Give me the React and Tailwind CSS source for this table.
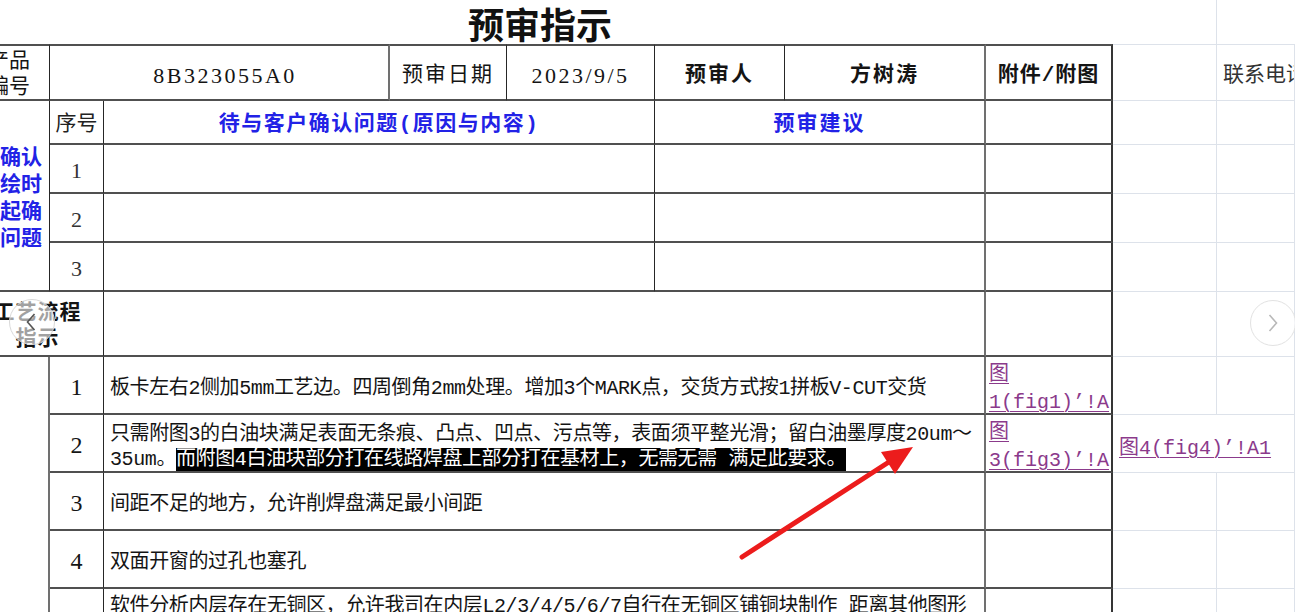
import React from 'react';

// cell borders
const T = 'border-t-2 border-t-[#505050]';
const H = 'border-b-2 border-b-[#505050]';
const V1 = 'border-r border-r-[#262626]';
const V2 = 'border-r-2 border-r-[#707070]';
const VE = 'border-r-2 border-r-[#353535]';
const LIGHT = 'border-r border-b border-[#dde2ea]';

const Light = ({ top, children, className = '' }) => (
  <div className={`${LIGHT} ${top ? 'border-t' : ''} ${className}`}>{children}</div>
);

const Num = ({ children, big }) => (
  <div
    className={`${V1} ${H} flex items-center justify-center pt-[4px] font-['Liberation_Serif',serif] ${
      big ? 'text-[24px] text-[#151515]' : 'text-[22px] text-[#333]'
    }`}
  >
    {children}
  </div>
);

const Link = ({ children }) => (
  <span className="text-[#8b3a8b] underline decoration-1 underline-offset-[3px]">{children}</span>
);

const rows = [
  { n: '1', text: ['板卡左右2侧加5mm工艺边。四周倒角2mm处理。增加3个MARK点，交货方式按1拼板V-CUT交货'], link: ['图', "1(fig1)’!A"] },
  { n: '2', text: null, link: ['图', "3(fig3)’!A"], side: "图4(fig4)’!A1" },
  { n: '3', text: ['间距不足的地方，允许削焊盘满足最小间距'] },
  { n: '4', text: ['双面开窗的过孔也塞孔'] },
];

export default function App() {
  return (
    <div className="relative w-[1295px] h-[612px] overflow-hidden bg-white text-[#141414] font-['Liberation_Mono','Noto_Sans_CJK_SC',monospace]">
      {/* title row */}
      <div className="flex h-[44px]">
        <div className="w-[1113px]">
          <div className="w-[1080px] text-center font-['Noto_Sans_CJK_SC',sans-serif] font-bold text-[36px] leading-[46px] text-[#111]">
            预审指示
          </div>
        </div>
        <div className="w-[104px] border-r border-[#dde2ea]" />
        <div className="flex-1" />
      </div>

      <div className="grid grid-cols-[50px_54px_286px_117px_148px_130px_201px_127px_104px_78px] grid-rows-[57px_44px_49px_49px_49px_65px_58px_58px_58px_58px_90px]">
        {/* row 1 */}
        <div className={`${T} ${H} ${V1} flex flex-col items-end justify-center overflow-hidden whitespace-nowrap pr-[19px] pt-[4px] text-[21px] leading-[26px]`}>
          <span>产品</span>
          <span>编号</span>
        </div>
        <div className={`${T} ${H} ${V2} col-span-2 flex items-center justify-center pl-[12px] pt-[6px] font-['Liberation_Serif',serif] text-[22px] tracking-[2.5px]`}>
          8B323055A0
        </div>
        <div className={`${T} ${H} ${V1} flex items-center justify-center pt-[6px] text-[21px] tracking-[2px]`}>预审日期</div>
        <div className={`${T} ${H} ${V1} flex items-center justify-center pt-[6px] font-['Liberation_Serif',serif] text-[22px] tracking-[2.5px]`}>
          2023/9/5
        </div>
        <div className={`${T} ${H} ${V1} flex items-center justify-center pt-[6px] font-bold text-[21px] tracking-[2px]`}>预审人</div>
        <div className={`${T} ${H} ${V2} flex items-center justify-center pt-[6px] font-bold text-[21px] tracking-[2px]`}>方树涛</div>
        <div className={`${T} ${H} ${VE} flex items-center justify-center pt-[6px] font-bold text-[21px] tracking-[1px]`}>附件/附图</div>
        <Light top />
        <Light top className="flex items-center overflow-hidden whitespace-nowrap pl-[6px] pt-[6px] text-[21px] text-[#333]">
          联系电话
        </Light>

        {/* row 2 */}
        <div className={`${H} ${V1} row-span-4 flex flex-col justify-center overflow-hidden whitespace-nowrap pt-[6px] text-[21px] leading-[27px] font-bold text-[#2222e6]`}>
          <span>确认</span>
          <span>绘时</span>
          <span>起确</span>
          <span>问题</span>
        </div>
        <div className={`${H} ${V1} flex items-center justify-center pt-[6px] text-[21px] text-[#222]`}>序号</div>
        <div className={`${H} ${V1} col-span-3 flex items-center justify-center pt-[6px] font-bold text-[21px] tracking-[1.5px] text-[#2222e6]`}>
          待与客户确认问题(原因与内容)
        </div>
        <div className={`${H} ${V2} col-span-2 flex items-center justify-center pt-[6px] font-bold text-[21px] tracking-[2px] text-[#2222e6]`}>
          预审建议
        </div>
        <div className={`${H} ${VE}`} />
        <Light />
        <Light />

        {/* rows 3-5 */}
        {['1', '2', '3'].map((n) => (
          <React.Fragment key={n}>
            <Num>{n}</Num>
            <div className={`${H} ${V1} col-span-3`} />
            <div className={`${H} ${V2} col-span-2`} />
            <div className={`${H} ${VE}`} />
            <Light />
            <Light />
          </React.Fragment>
        ))}

        {/* row 6 */}
        <div className={`${H} ${V1} col-span-2 flex flex-col items-center justify-center overflow-hidden whitespace-nowrap pr-[28px] pt-[6px] font-bold text-[21px] leading-[26px] tracking-[1px]`}>
          <span>工艺流程</span>
          <span>指示</span>
        </div>
        <div className={`${H} ${V2} col-span-5`} />
        <div className={`${H} ${VE}`} />
        <Light />
        <Light />

        {/* process rows */}
        <div className={`${V2} row-span-5`} />
        {rows.map((r) => (
          <React.Fragment key={r.n}>
            <Num big>{r.n}</Num>
            <div className={`${H} ${V2} col-span-5 flex flex-col justify-center overflow-hidden whitespace-nowrap pl-[6px] pt-[7px] text-[20px] leading-[25px] tracking-[-0.4px]`}>
              {r.text ? (
                r.text.map((t) => <span key={t}>{t}</span>)
              ) : (
                <>
                  <span>只需附图3的白油块满足表面无条痕、凸点、凹点、污点等，表面须平整光滑；留白油墨厚度20um～</span>
                  <span>
                    35um。<span className="bg-black text-white">而附图4白油块部分打在线路焊盘上部分打在基材上，无需无需 满足此要求。</span>
                  </span>
                </>
              )}
            </div>
            <div className={`${H} ${VE} flex flex-col justify-center overflow-hidden whitespace-nowrap pl-[3px] pt-[8px] text-[20px] leading-[28px]`}>
              {r.link && r.link.map((l) => <Link key={l}>{l}</Link>)}
            </div>
            {r.side ? (
              <Light className="col-span-2 flex items-center whitespace-nowrap pl-[6px] pt-[10px] text-[20px]">
                <Link>{r.side}</Link>
              </Light>
            ) : (
              <>
                <Light />
                <Light />
              </>
            )}
          </React.Fragment>
        ))}

        {/* row 5 (cut by the window) */}
        <Num big>5</Num>
        <div className={`${H} ${V2} col-span-5 flex flex-col overflow-hidden whitespace-nowrap pl-[6px] pt-[5px] text-[20px] leading-[25px] tracking-[-0.4px]`}>
          <span>软件分析内层存在无铜区，允许我司在内层L2/3/4/5/6/7自行在无铜区铺铜块制作 距离其他图形</span>
          <span>≥0.3mm，不影响电气性能</span>
        </div>
        <div className={`${H} ${VE}`} />
        <Light />
        <Light />
      </div>

      {/* red arrow */}
      <svg className="pointer-events-none absolute left-0 top-0" width="1295" height="612">
        <line x1="742" y1="557" x2="892" y2="460" stroke="#ec1c1c" strokeWidth="5" strokeLinecap="round" />
        <polygon points="913,447 895,474 881,452" fill="#ec1c1c" />
      </svg>

      {/* slider buttons */}
      <div className="absolute left-[9px] top-[299px] flex h-[46px] w-[46px] items-center justify-center rounded-full border border-[#d9d9d9] bg-white/60">
        <svg width="10" height="18" viewBox="0 0 10 18" className="-ml-[3px]">
          <polyline points="8.5,1 1.5,9 8.5,17" fill="none" stroke="#555" strokeWidth="1.6" />
        </svg>
      </div>
      <div className="absolute left-[1250px] top-[300px] flex h-[46px] w-[46px] items-center justify-center rounded-full border border-[#e2e2e2] bg-white/70">
        <svg width="10" height="18" viewBox="0 0 10 18">
          <polyline points="1.5,1 8.5,9 1.5,17" fill="none" stroke="#b8b8b8" strokeWidth="1.6" />
        </svg>
      </div>
    </div>
  );
}
